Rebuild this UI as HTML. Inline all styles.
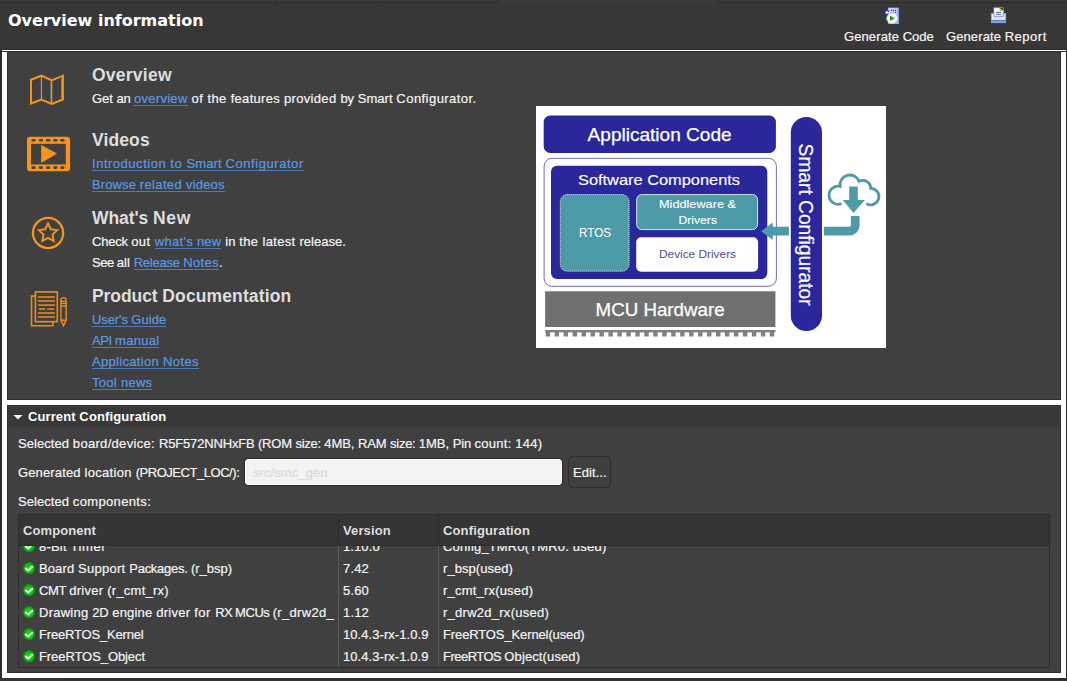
<!DOCTYPE html>
<html>
<head>
<meta charset="utf-8">
<title>Overview information</title>
<style>
*{box-sizing:border-box;margin:0;padding:0}
html,body{width:1067px;height:681px;overflow:hidden;background:#373737}
body{position:relative;font-family:"Liberation Sans",sans-serif;font-size:13px;color:#f4f4f4}
.abs{position:absolute}
.t{position:absolute;white-space:pre;line-height:21px;height:21px;font-size:13px;color:#f4f4f4;-webkit-text-stroke:0.2px}
.t.h{line-height:26px;height:26px;font-size:17.5px;font-weight:bold;color:#dedede}
.t.sb{font-weight:bold;color:#dedede}
.t.h,.t.sb{-webkit-text-stroke:0}
a{color:#589ae6;text-decoration:none;background:linear-gradient(#4d7cb6,#4d7cb6) no-repeat left bottom/100% 1px}
svg{position:absolute;overflow:visible}
</style>
</head>
<body>
<!-- top tab strip remnants -->
<div class="abs" style="left:0;top:0;width:1067px;height:3px;background:#3b3b3b"></div>
<div class="abs" style="left:0;top:2px;width:498px;height:1px;background:#2a2a2a"></div>
<div class="abs" style="left:717px;top:2px;width:350px;height:1px;background:#2a2a2a"></div>
<div class="abs" style="left:276px;top:0;width:1px;height:3px;background:#2a2a2a"></div>
<div class="abs" style="left:381px;top:0;width:1px;height:3px;background:#2a2a2a"></div>
<div class="abs" style="left:498px;top:0;width:1px;height:3px;background:#2a2a2a"></div>
<div class="abs" style="left:717px;top:0;width:1px;height:3px;background:#2a2a2a"></div>

<!-- header -->
<div class="abs" style="left:0;top:3px;width:1067px;height:47px;background:#373737"></div>
<div class="abs" id="title" style="left:8px;top:9px;font-family:'DejaVu Sans',sans-serif;font-weight:bold;font-size:16px;line-height:24px;color:#fff;white-space:nowrap">Overview information</div>

<!-- white frame -->
<div class="abs" style="left:0;top:49px;width:1067px;height:632px;background:#2d2d2d"></div>
<div class="abs" style="left:2px;top:50px;width:1064px;height:1px;background:#fff"></div>
<div class="abs" style="left:2px;top:52px;width:1064px;height:626px;background:#fff"></div>
<!-- panel 1 -->
<div class="abs" style="left:7px;top:51px;width:1054px;height:349px;background:#404040;border:1px solid #2e2e2e"></div>
<!-- panel 2 -->
<div class="abs" style="left:7px;top:405px;width:1054px;height:268px;background:#404040;border:1px solid #2e2e2e"></div>
<div class="abs" style="left:8px;top:407px;width:1051px;height:20px;background:#383838"></div>
<svg style="left:13px;top:414px" width="10" height="6" viewBox="0 0 10 6"><path d="M0.5 1 H9.5 L5 5.5 Z" fill="#fff"/></svg>
<!-- bottom strip -->
<div class="abs" style="left:0;top:678px;width:1067px;height:3px;background:#353535"></div>
<div class="abs" style="left:65px;top:679px;width:1002px;height:1px;background:#2b2b2b"></div>
<div class="abs" style="left:65px;top:679px;width:1px;height:2px;background:#2b2b2b"></div>
<div class="abs" style="left:110px;top:679px;width:1px;height:2px;background:#2b2b2b"></div>
<div class="abs" style="left:157px;top:679px;width:1px;height:2px;background:#2b2b2b"></div>
<div class="abs" style="left:208px;top:679px;width:1px;height:2px;background:#2b2b2b"></div>
<div class="abs" style="left:292px;top:679px;width:1px;height:2px;background:#2b2b2b"></div>
<div class="abs" style="left:325px;top:679px;width:1px;height:2px;background:#2b2b2b"></div>
<div class="abs" style="left:395px;top:679px;width:1px;height:2px;background:#2b2b2b"></div>
<div class="abs" style="left:505px;top:679px;width:1px;height:2px;background:#2b2b2b"></div>

<svg style="left:0;top:0" width="1067" height="681" viewBox="0 0 1067 681">
<!-- map icon -->
<g fill="none" stroke="#f7941d">
<path d="M31 79.7 L41.4 75.7 L51.7 80.5 L62.9 75.7 V99.5 L51.7 104 L41.4 99.5 L31 103.5 Z" stroke-width="2" stroke-linejoin="miter"/>
<path d="M41.4 75.7 V99.5 M51.7 80.5 V104" stroke-width="1.1"/>
<path d="M50.9 82 V102 M61.6 78.5 V98.5" stroke="#fff" stroke-width="0.5" opacity="0.75"/>
</g>
<!-- video icon -->
<rect x="27" y="136.8" width="43.1" height="34.4" rx="3.2" fill="#f7941d"/>
<rect x="31" y="143.8" width="34.8" height="20.7" fill="#404040"/>
<rect x="31.4" y="139.0" width="4.2" height="2.6" rx="1.3" fill="#404040"/><rect x="31.4" y="166.3" width="4.2" height="2.6" rx="1.3" fill="#404040"/><rect x="38.8" y="139.0" width="4.2" height="2.6" rx="1.3" fill="#404040"/><rect x="38.8" y="166.3" width="4.2" height="2.6" rx="1.3" fill="#404040"/><rect x="46.0" y="139.0" width="4.2" height="2.6" rx="1.3" fill="#404040"/><rect x="46.0" y="166.3" width="4.2" height="2.6" rx="1.3" fill="#404040"/><rect x="53.3" y="139.0" width="4.2" height="2.6" rx="1.3" fill="#404040"/><rect x="53.3" y="166.3" width="4.2" height="2.6" rx="1.3" fill="#404040"/><rect x="60.3" y="139.0" width="4.2" height="2.6" rx="1.3" fill="#404040"/><rect x="60.3" y="166.3" width="4.2" height="2.6" rx="1.3" fill="#404040"/>
<path d="M41.2 144.9 L57.1 153.6 L41.2 162.9 Z" fill="#f7941d"/>
<!-- star icon -->
<circle cx="48.05" cy="233" r="15.1" fill="none" stroke="#f7941d" stroke-width="2.3"/>
<polygon points="48.0,223.4 50.8,229.3 57.2,230.1 52.5,234.6 53.7,240.9 48.0,237.8 42.3,240.9 43.5,234.6 38.8,230.1 45.2,229.3" fill="none" stroke="#f7941d" stroke-width="1.9" stroke-linejoin="miter"/>
<!-- doc icon -->
<g fill="none" stroke="#ee8c1b" stroke-width="1.6">
<rect x="35.4" y="291.9" width="21.9" height="29.8"/>
<path d="M35.4 296.1 H31.5 V325.8 H52.9 V321.7"/>
<g stroke-width="1.7" stroke="#e08519"><line x1="38" y1="297" x2="54.9" y2="297"/><line x1="38" y1="301" x2="54.9" y2="301"/><line x1="38" y1="305.1" x2="54.9" y2="305.1"/><line x1="38" y1="313" x2="54.9" y2="313"/><line x1="38" y1="317" x2="54.9" y2="317"/><line x1="39" y1="309" x2="45.3" y2="309"/><line x1="47.3" y1="309" x2="54.1" y2="309"/></g>
<path d="M60.9 320.3 V300 A2.6 2.4 0 0 1 66.1 300 V320.3 L63.5 325.6 Z M60.9 301.4 H66.1 M60.9 303.4 H66.1 M60.9 306 H66.1 M60.9 320.3 H66.1" stroke-width="1.4"/>
</g>
<!-- generate code icon -->
<rect x="887.9" y="7.7" width="11.1" height="16.2" fill="#a9b9f2"/>
<rect x="889" y="8.6" width="8" height="6" fill="#dfe5f9"/>
<rect x="897.6" y="8" width="1.4" height="15.6" fill="#8c9fe6"/>
<circle cx="886.8" cy="12.5" r="2.1" fill="#fff" stroke="#2222e0" stroke-width="1.3" stroke-dasharray="10 3.2" transform="rotate(35 886.8 12.5)"/>
<g fill="#2a2ae6"><rect x="890.7" y="9.7" width="1.4" height="1.4"/><rect x="892.8" y="9.7" width="1.4" height="1.4"/><rect x="894.9" y="9.7" width="1.4" height="1.4"/><rect x="894.9" y="11.8" width="1.4" height="1.4"/></g>
<rect x="890" y="12" width="4" height="1" fill="#8ea2ea"/>
<circle cx="892.1" cy="18.3" r="5.3" fill="#fff" stroke="#c3cdf6" stroke-width="0.8"/>
<path d="M890 15.5 L894.9 18.4 L890 21.1 Z" fill="#1f9c00"/>
<!-- generate report icon -->
<rect x="994" y="7.9" width="9.2" height="8.8" fill="#f3f5fa" stroke="#e4d6a4" stroke-width="0.6"/>
<path d="M999.6 7.9 H1003.2 V10.8 Z" fill="#363636"/>
<path d="M999.6 7.9 L1003.2 10.8 H999.6 Z" fill="#e2a324"/>
<rect x="996" y="11.9" width="5" height="1" fill="#4a6cb2"/>
<rect x="996" y="13.9" width="5" height="1" fill="#4a6cb2"/>
<path d="M991.2 13.3 H994 V16.7 H1003.2 V13.3 H1005.8 V20.4 H991.2 Z" fill="#e3eaf5" stroke="#6f93d4" stroke-width="0.7"/>
<rect x="991" y="20.3" width="15" height="2.8" fill="#7ea3de"/>
<rect x="991" y="20" width="15" height="0.9" fill="#5d85cb"/>
</svg>

<svg style="left:536px;top:106px" width="350" height="242" viewBox="536 106 350 242" font-family="'Liberation Sans',sans-serif">
<rect x="536" y="106" width="350" height="242" fill="#fff"/>
<rect x="543.7" y="115.5" width="232.2" height="37.4" rx="6.5" fill="#2a269c"/>
<text id="d1" x="587.6" y="141.1" font-size="18.4" fill="#fff" stroke="#fff" stroke-width="0.25" textLength="144" lengthAdjust="spacingAndGlyphs">Application Code</text>
<rect x="544.1" y="158.3" width="232.3" height="128" rx="8" fill="#fff" stroke="#4a48a8" stroke-width="0.8"/>
<rect x="551" y="165.8" width="216.3" height="113.2" rx="6" fill="#2a269c"/>
<text id="d2" x="578" y="184.8" font-size="14.8" fill="#fff" stroke="#fff" stroke-width="0.15" textLength="162" lengthAdjust="spacingAndGlyphs">Software Components</text>
<rect x="560.3" y="194.6" width="68.8" height="76.6" rx="7" fill="#4e9ba8" stroke="#e8f2f4" stroke-width="1" stroke-dasharray="1 1"/>
<text id="d3" x="579" y="237.4" font-size="12.7" fill="#fff" textLength="32" lengthAdjust="spacingAndGlyphs">RTOS</text>
<rect x="636.7" y="194.6" width="120.9" height="35" rx="5" fill="#4e9ba8" stroke="#d4e6ea" stroke-width="1"/>
<text id="d4" x="659" y="207.8" font-size="11.3" fill="#fff" stroke="#fff" stroke-width="0.12" textLength="77" lengthAdjust="spacingAndGlyphs">Middleware &amp;</text>
<text id="d5" x="678.5" y="223.5" font-size="11.3" fill="#fff" stroke="#fff" stroke-width="0.12" textLength="38.5" lengthAdjust="spacingAndGlyphs">Drivers</text>
<rect x="636.2" y="237.2" width="121.9" height="34.5" rx="5" fill="#fff"/>
<text id="d6" x="659" y="258.2" font-size="11" fill="#4f4c9e" textLength="77" lengthAdjust="spacingAndGlyphs">Device Drivers</text>
<rect x="545.1" y="291.3" width="230.3" height="35.7" fill="#707070"/>
<text id="d7" x="595.6" y="316.3" font-size="18.2" fill="#fff" stroke="#fff" stroke-width="0.25" textLength="129" lengthAdjust="spacingAndGlyphs">MCU Hardware</text>
<rect x="545.1" y="330" width="230.3" height="2.4" fill="#808080"/>
<line x1="545.7" y1="334" x2="774.3" y2="334" stroke="#808080" stroke-width="4.8" stroke-dasharray="4.4 4.564"/>
<rect x="790.8" y="117" width="31.2" height="214.1" rx="15.6" fill="#2a269c"/>
<text id="d8" transform="translate(798.6,143.6) rotate(90)" x="0" y="0" font-size="20" fill="#fff" stroke="#fff" stroke-width="0.2" textLength="162" lengthAdjust="spacingAndGlyphs">Smart Configurator</text>
<!-- cloud -->
<path d="M841.4 203.6 A9 9 0 1 1 840.2 186.5 A9.8 9.8 0 0 1 859 181.3 A8 8 0 0 1 870.7 188.3 A8.3 8.3 0 1 1 866.2 203.6" fill="none" stroke="#4e9ba8" stroke-width="2.8"/>
<path d="M849.2 186.5 H857.8 V200 H864.9 L853.5 213 L842.9 200 H849.2 Z" fill="#4e9ba8"/>
<!-- elbow -->
<path d="M850.8 215.9 H859.6 V225.5 A10 10 0 0 1 849.6 235.5 H823.8 V226.8 H849.3 A1.5 1.5 0 0 0 850.8 225.3 Z" fill="#4e9ba8"/>
<!-- left arrow -->
<path d="M788.9 226.8 V235.6 H772.8 V240 L761 231.3 L772.8 222.4 V226.8 Z" fill="#4e9ba8"/>
</svg>


<!-- text field + button -->
<div class="abs" style="left:244px;top:458px;width:319px;height:28px;background:#2c2c2c;border-radius:4px"></div>
<div class="abs" style="left:245px;top:459px;width:317px;height:26px;background:#f3f3f3;border:1px solid #fff;border-radius:3px"></div>
<div class="abs" style="left:568px;top:456px;width:43px;height:32px;border:1px solid #2e2e2e;border-radius:4px;background:#3f3f3f"></div>

<!-- table -->
<div class="abs" style="left:18px;top:514px;width:1032px;height:154px;border:1px solid #2c2c2c;background:#404040"></div>
<div class="abs" style="left:19px;top:515px;width:1030px;height:30px;background:#353535"></div>
<div class="abs" style="left:19px;top:545px;width:1030px;height:1px;background:#2c2c2c"></div>
<div class="abs" style="left:338px;top:515px;width:1px;height:30px;background:#2c2c2c"></div>
<div class="abs" style="left:438px;top:515px;width:1px;height:30px;background:#2c2c2c"></div>
<div class="abs" style="left:338px;top:546px;width:1px;height:121px;background:#5c5c5c"></div>
<div class="abs" style="left:438px;top:546px;width:1px;height:121px;background:#5c5c5c"></div>

<div class="t h" style="left:92px;top:62.00px"><span style="letter-spacing:0.24px">Overview</span></div>
<div class="t" style="left:92px;top:88.00px"><span style="letter-spacing:-0.02px">Get </span><span style="letter-spacing:-0.19px">an </span><a><span style="letter-spacing:0.28px">overview</span></a><span style="letter-spacing:0.28px"> </span><span style="letter-spacing:0.49px">of </span><span style="letter-spacing:0.39px">the </span><span style="letter-spacing:0.31px">features </span><span style="letter-spacing:0.32px">provided </span><span style="letter-spacing:-0.03px">by </span><span style="letter-spacing:0.07px">Smart </span><span style="letter-spacing:0.45px">Configurator.</span></div>
<div class="t h" style="left:92px;top:127.00px"><span style="letter-spacing:0.11px">Videos</span></div>
<div class="t" style="left:92px;top:153.00px"><a><span style="letter-spacing:0.52px">Introduction </span><span style="letter-spacing:0.58px">to </span><span style="letter-spacing:0.12px">Smart </span><span style="letter-spacing:0.56px">Configurator</span></a></div>
<div class="t" style="left:92px;top:174.00px"><a><span style="letter-spacing:0.12px">Browse </span><span style="letter-spacing:0.35px">related </span><span style="letter-spacing:0.18px">videos</span></a></div>
<div class="t h" style="left:92px;top:205.00px"><span style="letter-spacing:-0.07px">What's </span><span style="letter-spacing:0.61px">New</span></div>
<div class="t" style="left:92px;top:231.00px"><span style="letter-spacing:-0.22px">Check </span><span style="letter-spacing:0.50px">out </span><a><span style="letter-spacing:0.29px">what's </span><span style="letter-spacing:0.22px">new</span></a><span style="letter-spacing:0.22px"> </span><span style="letter-spacing:0.06px">in </span><span style="letter-spacing:0.39px">the </span><span style="letter-spacing:0.33px">latest </span><span style="letter-spacing:0.04px">release.</span></div>
<div class="t" style="left:92px;top:252.00px"><span style="letter-spacing:-0.50px">See </span><span style="letter-spacing:0.07px">all </span><a><span style="letter-spacing:-0.22px">Release </span><span style="letter-spacing:0.34px">Notes</span></a><span style="letter-spacing:-0.34px">.</span></div>
<div class="t h" style="left:92px;top:283.00px"><span style="letter-spacing:-0.08px">Product </span><span style="letter-spacing:0.12px">Documentation</span></div>
<div class="t" style="left:92px;top:309.00px"><a><span style="letter-spacing:-0.10px">User's </span><span style="letter-spacing:0.04px">Guide</span></a></div>
<div class="t" style="left:92px;top:330.00px"><a><span style="letter-spacing:-0.37px">API </span><span style="letter-spacing:0.26px">manual</span></a></div>
<div class="t" style="left:92px;top:351.00px"><a><span style="letter-spacing:0.31px">Application </span><span style="letter-spacing:0.43px">Notes</span></a></div>
<div class="t" style="left:92px;top:372.00px"><a><span style="letter-spacing:0.29px">Tool </span><span style="letter-spacing:0.25px">news</span></a></div>
<div class="t" style="left:844px;top:26.00px"><span style="letter-spacing:0.10px">Generate </span><span style="letter-spacing:0.01px">Code</span></div>
<div class="t" style="left:946px;top:26.00px"><span style="letter-spacing:0.10px">Generate </span><span style="letter-spacing:0.50px">Report</span></div>
<div class="t sb" style="left:28px;top:406.00px;color:#ffffff"><span style="letter-spacing:0.10px">Current </span><span style="letter-spacing:0.14px">Configuration</span></div>
<div class="t" style="left:18px;top:433.00px"><span style="letter-spacing:0.07px">Selected </span><span style="letter-spacing:0.31px">board/device:</span></div>
<div class="t" style="left:159px;top:433.00px"><span style="letter-spacing:-0.17px">R5F572NNHxFB </span><span style="letter-spacing:-0.16px">(ROM </span><span style="letter-spacing:-0.27px">size: </span><span style="letter-spacing:-0.01px">4MB, </span><span style="letter-spacing:-0.13px">RAM </span><span style="letter-spacing:-0.27px">size: </span><span style="letter-spacing:-0.01px">1MB, </span><span style="letter-spacing:-0.13px">Pin </span><span style="letter-spacing:0.25px">count: </span><span style="letter-spacing:0.24px">144)</span></div>
<div class="t" style="left:18px;top:462.00px"><span style="letter-spacing:0.14px">Generated </span><span style="letter-spacing:0.31px">location </span><span style="letter-spacing:-0.46px">(PROJECT_LOC/):</span></div>
<div class="t" style="left:253px;top:462.00px;color:#dadade"><span style="letter-spacing:0.08px">src/smc_gen</span></div>
<div class="t" style="left:573px;top:462.00px"><span style="letter-spacing:0.07px">Edit...</span></div>
<div class="t" style="left:18px;top:491.00px"><span style="letter-spacing:0.07px">Selected </span><span style="letter-spacing:0.35px">components:</span></div>
<div class="t sb" style="left:23px;top:520.00px"><span style="letter-spacing:0.09px">Component</span></div>
<div class="t sb" style="left:343px;top:520.00px"><span style="letter-spacing:0.11px">Version</span></div>
<div class="t sb" style="left:443px;top:520.00px"><span style="letter-spacing:0.14px">Configuration</span></div>
<div class="abs" style="left:0;top:546px;width:1067px;height:121px;overflow:hidden">
<svg style="left:0;top:0" width="60" height="121" viewBox="0 546 60 121"><defs><radialGradient id="gg" cx="0.5" cy="0.55" r="0.55"><stop offset="0" stop-color="#12ea12"/><stop offset="0.55" stop-color="#0fc80f"/><stop offset="1" stop-color="#0a840a"/></radialGradient></defs><circle cx="29" cy="545.9" r="6" fill="url(#gg)"/><path d="M25.2 546.0 L28.3 548.4 L32.7 544.2" fill="none" stroke="#fff" stroke-width="1.9"/><circle cx="29" cy="567.9" r="6" fill="url(#gg)"/><path d="M25.2 568.0 L28.3 570.4 L32.7 566.2" fill="none" stroke="#fff" stroke-width="1.9"/><circle cx="29" cy="589.9" r="6" fill="url(#gg)"/><path d="M25.2 590.0 L28.3 592.4 L32.7 588.2" fill="none" stroke="#fff" stroke-width="1.9"/><circle cx="29" cy="611.9" r="6" fill="url(#gg)"/><path d="M25.2 612.0 L28.3 614.4 L32.7 610.2" fill="none" stroke="#fff" stroke-width="1.9"/><circle cx="29" cy="633.9" r="6" fill="url(#gg)"/><path d="M25.2 634.0 L28.3 636.4 L32.7 632.2" fill="none" stroke="#fff" stroke-width="1.9"/><circle cx="29" cy="655.9" r="6" fill="url(#gg)"/><path d="M25.2 656.0 L28.3 658.4 L32.7 654.2" fill="none" stroke="#fff" stroke-width="1.9"/></svg>
<div class="t" style="left:39px;top:-10.00px"><span style="letter-spacing:0.21px">8-Bit </span><span style="letter-spacing:0.53px">Timer</span></div>
<div class="t" style="left:343px;top:-10.00px"><span style="letter-spacing:0.10px">1.10.0</span></div>
<div class="t" style="left:443px;top:-10.00px"><span style="letter-spacing:0.14px">Config_TMR0(TMR0: </span><span style="letter-spacing:0.27px">used)</span></div>
<div class="t" style="left:39px;top:12.00px"><span style="letter-spacing:0.11px">Board </span><span style="letter-spacing:0.27px">Support </span><span style="letter-spacing:-0.27px">Packages. </span><span style="letter-spacing:-0.01px">(r_bsp)</span></div>
<div class="t" style="left:343px;top:12.00px"><span style="letter-spacing:0.18px">7.42</span></div>
<div class="t" style="left:443px;top:12.00px"><span style="letter-spacing:0.05px">r_bsp(used)</span></div>
<div class="t" style="left:39px;top:34.00px"><span style="letter-spacing:-0.33px">CMT </span><span style="letter-spacing:0.27px">driver </span><span style="letter-spacing:0.25px">(r_cmt_rx)</span></div>
<div class="t" style="left:343px;top:34.00px"><span style="letter-spacing:0.18px">5.60</span></div>
<div class="t" style="left:443px;top:34.00px"><span style="letter-spacing:0.20px">r_cmt_rx(used)</span></div>
<div class="t" style="left:39px;top:56.00px"><span style="letter-spacing:0.24px">Drawing </span><span style="letter-spacing:-0.08px">2D </span><span style="letter-spacing:0.18px">engine </span><span style="letter-spacing:0.27px">driver </span><span style="letter-spacing:0.55px">for </span><span style="letter-spacing:-0.61px">RX </span><span style="letter-spacing:-0.41px">MCUs </span><span style="letter-spacing:0.32px">(r_drw2d_</span></div>
<div class="t" style="left:343px;top:56.00px"><span style="letter-spacing:0.18px">1.12</span></div>
<div class="t" style="left:443px;top:56.00px"><span style="letter-spacing:0.26px">r_drw2d_rx(used)</span></div>
<div class="t" style="left:39px;top:78.00px"><span style="letter-spacing:-0.18px">FreeRTOS_Kernel</span></div>
<div class="t" style="left:343px;top:78.00px"><span style="letter-spacing:0.06px">10.4.3-rx-1.0.9</span></div>
<div class="t" style="left:443px;top:78.00px"><span style="letter-spacing:-0.12px">FreeRTOS_Kernel(used)</span></div>
<div class="t" style="left:39px;top:100.00px"><span style="letter-spacing:-0.08px">FreeRTOS_Object</span></div>
<div class="t" style="left:343px;top:100.00px"><span style="letter-spacing:0.06px">10.4.3-rx-1.0.9</span></div>
<div class="t" style="left:443px;top:100.00px"><span style="letter-spacing:-0.52px">FreeRTOS </span><span style="letter-spacing:0.12px">Object(used)</span></div>
</div>
</body>
</html>
